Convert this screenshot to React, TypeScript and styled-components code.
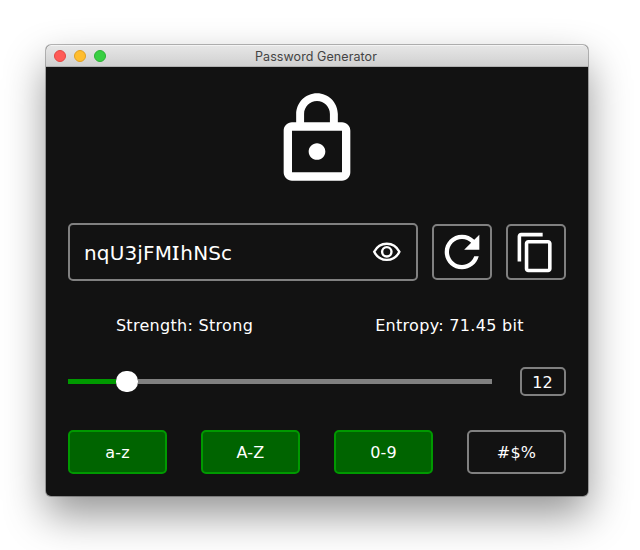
import React, { useState } from "react";
import styled, { createGlobalStyle } from "styled-components";

const GlobalStyle = createGlobalStyle`
  * { box-sizing: border-box; }
  html, body { margin: 0; background: #fff; overflow: hidden; }
  body { font-family: Verdana, "DejaVu Sans", sans-serif; }
  button { font: inherit; color: inherit; padding: 0; margin: 0; }
`;

const Desktop = styled.main`
  width: 640px;
  height: 550px;
  padding: 45px 0 0 46px;
  overflow: hidden;
`;

const Window = styled.section`
  width: 542px;
  height: 451px;
  border-radius: 5px;
  overflow: hidden;
  background: #121212;
  color: #fff;
  box-shadow: 0 0 0 1px rgba(0, 0, 0, 0.27), 0 19px 41px rgba(0, 0, 0, 0.42);
`;

const TitleBar = styled.header`
  display: grid;
  grid-template-columns: 60px 1fr 62px;
  align-items: start;
  height: 22px;
  padding: 0 8px;
  background: linear-gradient(#e6e6e6, #d0d0d0);
  border-top: 1px solid #f4f4f4;
  border-bottom: 1px solid #b0b0b0;
`;

const Lights = styled.div`
  display: flex;
  gap: 8px;
  padding-top: 4px;
`;

const Light = styled.span<{ $fill: string; $edge: string }>`
  width: 12px;
  height: 12px;
  border-radius: 50%;
  background: ${(p) => p.$fill};
  border: 1px solid ${(p) => p.$edge};
`;

const Title = styled.h1`
  margin: 0;
  padding-top: 1px;
  text-align: center;
  font: 400 12.5px/20px Inter, sans-serif;
  letter-spacing: 0.08px;
  color: #444;
`;

const Content = styled.div`
  display: flex;
  flex-direction: column;
  padding: 22px 22px 0;
`;

const LockIcon = styled.svg`
  align-self: center;
  width: 100px;
  height: 100px;
  fill: #fff;
`;

const PasswordRow = styled.div`
  display: flex;
  align-items: center;
  gap: 14px;
  margin-top: 34px;
`;

const PasswordField = styled.div`
  display: flex;
  align-items: center;
  justify-content: space-between;
  width: 350px;
  height: 58px;
  padding: 0 14px;
  border: 2px solid #808080;
  border-radius: 5px;
`;

const Password = styled.span`
  font-size: 20px;
  line-height: 24px;
  letter-spacing: 0.15px;
`;

const BarredLetter = styled.span`
  font-family: "Noto Sans", sans-serif;
  font-weight: 500;
  font-size: 20.4px;
  letter-spacing: 1px;
`;

const IconButton = styled.button`
  display: flex;
  align-items: center;
  justify-content: center;
  width: 60px;
  height: 56px;
  border: 2px solid #808080;
  border-radius: 5px;
  background: transparent;
`;

const CopyButton = styled(IconButton)`
  padding-right: 2px;
`;

const PlainButton = styled.button`
  display: flex;
  border: 0;
  background: transparent;
`;

const Icon = styled.svg<{ $size: number }>`
  flex: none;
  width: ${(p) => p.$size}px;
  height: ${(p) => p.$size}px;
  fill: #fff;
`;

const EyeIcon = styled.svg`
  width: 30px;
  height: 22px;
  fill: none;
  stroke: #fff;
  stroke-width: 2.4;
`;

const Stats = styled.div`
  display: grid;
  grid-template-columns: 233px 297px;
  margin: 34px -14px 0 0;
  font-size: 16px;
  line-height: 22px;
  letter-spacing: 0.3px;
  text-align: center;
`;

const Stat = styled.span`
  white-space: nowrap;
`;

const LengthRow = styled.div`
  display: flex;
  align-items: center;
  gap: 28px;
  height: 29px;
  margin-top: 30px;
`;

const Slider = styled.div`
  display: flex;
  align-items: center;
  width: 424px;
`;

const Track = styled.span<{ $filled?: boolean }>`
  flex: ${(p) => (p.$filled ? "0 0 48px" : "1")};
  height: 5px;
  background: ${(p) => (p.$filled ? "#009900" : "#808080")};
`;

const Thumb = styled.span`
  width: 22px;
  height: 21px;
  border-radius: 10px;
  background: #fff;
`;

const LengthBox = styled.div`
  width: 46px;
  height: 29px;
  padding-right: 1px;
  border: 2px solid #808080;
  border-radius: 5px;
  font-size: 16px;
  line-height: 27px;
  text-align: center;
`;

const Toggles = styled.div`
  display: flex;
  gap: 34px;
  margin-top: 34px;
`;

const Toggle = styled.button<{ $on: boolean }>`
  width: 99px;
  height: 44px;
  border: 2px solid ${(p) => (p.$on ? "#009900" : "#808080")};
  border-radius: 5px;
  background: ${(p) => (p.$on ? "#006400" : "transparent")};
  font-size: 16px;
  letter-spacing: 0.2px;
`;

const charsets = ["a-z", "A-Z", "0-9", "#$%"];

export default function App() {
  const [active, setActive] = useState([true, true, true, false]);
  const toggle = (index: number) =>
    setActive((current) => current.map((on, i) => (i === index ? !on : on)));

  return (
    <Desktop>
      <GlobalStyle />
      <Window>
        <TitleBar>
          <Lights>
            <Light $fill="#ff5a56" $edge="#e24742" />
            <Light $fill="#ffbd2e" $edge="#dfa022" />
            <Light $fill="#38cf42" $edge="#2bb134" />
          </Lights>
          <Title>Password Generator</Title>
        </TitleBar>
        <Content>
          <LockIcon viewBox="0 0 24 24">
            <path d="M12 17c1.1 0 2-.9 2-2s-.9-2-2-2-2 .9-2 2 .9 2 2 2zm6-9h-1V6c0-2.76-2.24-5-5-5S7 3.24 7 6v2H6c-1.1 0-2 .9-2 2v10c0 1.1.9 2 2 2h12c1.1 0 2-.9 2-2V10c0-1.1-.9-2-2-2zM8.9 6c0-1.71 1.39-3.1 3.1-3.1s3.1 1.39 3.1 3.1v2H8.9V6zM18 20H6V10h12v10z" />
          </LockIcon>
          <PasswordRow>
            <PasswordField>
              <Password>
                nqU3jFM<BarredLetter>I</BarredLetter>hNSc
              </Password>
              <PlainButton aria-label="Show password">
                <EyeIcon viewBox="0 0 30 22">
                  <path d="M2.2 10.8C5 5.3 9.4 2.700 14.800 2.700S24.600 5.300 27.400 10.800C24.600 16.300 20.200 18.900 14.800 18.900S5 16.300 2.200 10.800Z" />
                  <circle cx="14.8" cy="10.8" r="4.7" />
                </EyeIcon>
              </PlainButton>
            </PasswordField>
            <IconButton aria-label="Generate">
              <Icon $size={52} viewBox="0 0 24 24">
                <path d="M17.65 6.35C16.2 4.9 14.21 4 12 4c-4.42 0-7.99 3.58-7.99 8s3.57 8 7.99 8c3.73 0 6.84-2.55 7.73-6h-2.08c-.82 2.33-3.04 4-5.65 4-3.31 0-6-2.69-6-6s2.69-6 6-6c1.66 0 3.14.69 4.22 1.78L13 11h7V4l-2.35 2.35z" />
              </Icon>
            </IconButton>
            <CopyButton aria-label="Copy">
              <Icon $size={43} viewBox="0 0 24 24">
                <path d="M16 1H4c-1.1 0-2 .9-2 2v14h2V3h12V1zm3 4H8c-1.1 0-2 .9-2 2v14c0 1.1.9 2 2 2h11c1.1 0 2-.9 2-2V7c0-1.1-.9-2-2-2zm0 16H8V7h11v14z" />
              </Icon>
            </CopyButton>
          </PasswordRow>
          <Stats>
            <Stat>Strength: Strong</Stat>
            <Stat>Entropy: 71.45 bit</Stat>
          </Stats>
          <LengthRow>
            <Slider>
              <Track $filled />
              <Thumb />
              <Track />
            </Slider>
            <LengthBox>12</LengthBox>
          </LengthRow>
          <Toggles>
            {charsets.map((label, i) => (
              <Toggle key={label} $on={active[i]} onClick={() => toggle(i)}>
                {label}
              </Toggle>
            ))}
          </Toggles>
        </Content>
      </Window>
    </Desktop>
  );
}
